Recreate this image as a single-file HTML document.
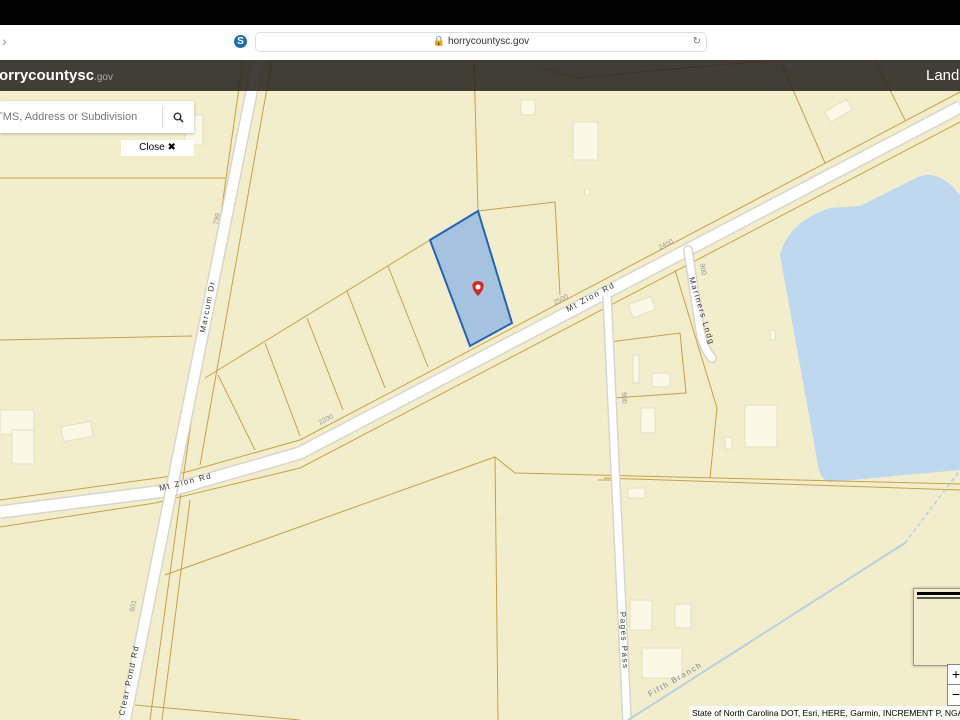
<!DOCTYPE html>
<html><head><meta charset="utf-8"><style>
html,body{margin:0;padding:0;width:960px;height:720px;overflow:hidden;background:#f2eecb;font-family:"Liberation Sans",sans-serif}
.top{position:absolute;left:0;top:0;width:960px;height:25px;background:#000}
.bar{position:absolute;left:0;top:25px;width:960px;height:35px;background:#fff;border-bottom:1px solid #ddd}
.url{position:absolute;left:255px;top:32px;width:450px;height:18px;background:#fff;border:1px solid #ddd;border-radius:5px;font-size:10px;color:#333;text-align:center;line-height:18px}
.hdr{position:absolute;left:0;top:60px;width:960px;height:31px;background:rgba(40,38,32,0.88);color:#fff}
.search{position:absolute;left:0;top:101px;width:194px;height:32px;background:#fff;box-shadow:0 1px 3px rgba(0,0,0,.25);font-size:11px;color:#777;overflow:hidden}
.close{position:absolute;left:121px;top:140px;width:73px;height:16px;background:#fff;font-size:10px;text-align:center;line-height:16px;color:#000}
.attr{position:absolute;left:689px;top:706px;width:280px;height:14px;background:rgba(255,255,255,.85);font-size:8.5px;line-height:14px;padding-left:3px;color:#000;white-space:nowrap}
.mini{position:absolute;left:913px;top:588px;width:50px;height:76px;background:#f2eecb;border:1px solid #999;box-shadow:0 0 3px rgba(0,0,0,.3)}
.zoom{position:absolute;left:947px;top:664px;width:16px;height:40px;background:#fff;border:1px solid #888;font-size:14px;line-height:19px;text-align:center}
</style></head><body>
<svg width="960" height="720" style="position:absolute;left:0;top:0">
<rect width="960" height="720" fill="#f2eecb"/>
<path d="M780 255 Q788 222 830 208 L860 206 L918 177 Q935 170 952 186 L960 195 L960 470 L830 482 Q820 480 818 465 Z" fill="#bed8ef"/>
<g stroke="#c9a04a" stroke-width="1" fill="none">
<path d="M0 500 L172 476 L300 440 L960 92"/>
<path d="M0 527 L155 503 L300 468 L960 122"/>
<path d="M243 60 L180 500 L150 720"/>
<path d="M272 60 L200 465"/>
<path d="M190 500 L162 720"/>
<path d="M0 340 L192 336"/>
<path d="M0 178 L225 178"/>
<path d="M205 378 L430 240 L478 211 L555 202 L560 295"/>
<path d="M218 375 L255 450"/><path d="M265 343 L300 436"/><path d="M307 318 L343 410"/><path d="M347 291 L385 388"/><path d="M388 266 L428 367"/>
<path d="M474 60 L478 211"/>
<path d="M165 575 L495 457 L515 473 L960 484"/>
<path d="M495 457 L498 720"/>
<path d="M608 300 L612 480 L598 480"/>
<path d="M610 342 L680 333 L686 393 L613 398"/>
<path d="M675 270 L717 408 L710 478"/>
<path d="M604 478 L960 490"/>
<path d="M780 60 L825 163"/><path d="M875 60 L905 120"/>
<path d="M540 68 L580 78 L660 70 L780 60"/>
<path d="M135 705 L300 720"/>
</g>
<g stroke-linecap="butt" fill="none">
<path d="M0 512 L172 490 L300 453 L960 107" stroke="#d8d6cc" stroke-width="14"/>
<path d="M0 512 L172 490 L300 453 L960 107" stroke="#fff" stroke-width="11"/>
<path d="M258 60 L125 720" stroke="#d8d6cc" stroke-width="13"/>
<path d="M258 60 L125 720" stroke="#fff" stroke-width="10"/>
<path d="M607 296 L627 720" stroke="#d8d6cc" stroke-width="10"/>
<path d="M607 296 L627 720" stroke="#fff" stroke-width="7"/>
<path d="M688 250 L700 330 Q703 348 712 358" stroke="#d8d6cc" stroke-width="10" stroke-linecap="round"/>
<path d="M688 250 L700 330 Q703 348 712 358" stroke="#fff" stroke-width="7" stroke-linecap="round"/>
<path d="M628 720 L905 543" stroke="#b8d0e5" stroke-width="2"/>
<path d="M905 543 L960 470" stroke="#b8d0e5" stroke-width="1.5" stroke-dasharray="4 3"/>
</g>
<g fill="#fbf9e6" stroke="#e2dfc4">
<rect x="521" y="100" width="14" height="15"/><rect x="573" y="122" width="25" height="38"/>
<rect x="826" y="105" width="25" height="12" transform="rotate(-30 838 111)"/>
<rect x="630" y="300" width="24" height="14" transform="rotate(-20 642 307)"/>
<rect x="633" y="355" width="6" height="28"/><rect x="652" y="373" width="18" height="14"/>
<rect x="641" y="408" width="14" height="25"/><rect x="745" y="405" width="32" height="42"/>
<rect x="725" y="437" width="7" height="12"/><rect x="770" y="330" width="5" height="10"/>
<rect x="630" y="600" width="22" height="30"/><rect x="675" y="604" width="16" height="24"/>
<rect x="642" y="648" width="40" height="30"/><rect x="628" y="488" width="17" height="10"/>
<rect x="0" y="410" width="34" height="24"/><rect x="12" y="430" width="22" height="34"/>
<rect x="62" y="424" width="30" height="15" transform="rotate(-10 77 431)"/>
<rect x="185" y="115" width="18" height="30"/><rect x="585" y="189" width="5" height="6"/>
</g>
<polygon points="430,240 478,211 512,323 470,346" fill="#a5c3de" stroke="#2563b8" stroke-width="2"/>
<path d="M478 296 C470 288 471 281 478 281 C485 281 486 288 478 296 Z" fill="#d42a20"/>
<circle cx="478" cy="287" r="2.5" fill="#fff"/>
<g font-family="Liberation Sans" font-size="8" fill="#333" letter-spacing="1.5">
<text transform="translate(160 491) rotate(-14)">Mt Zion Rd</text>
<text transform="translate(568 312) rotate(-28)">Mt Zion Rd</text>
<text transform="translate(205 333) rotate(-79)">Marcum Dr</text>
<text transform="translate(124 716) rotate(-78)">Clear Pond Rd</text>
<text transform="translate(620 612) rotate(87)">Pages Pass</text>
<text transform="translate(689 278) rotate(73)">Mariners Lndg</text>
<text transform="translate(650 697) rotate(-30)" fill="#7a8a99">Fifth Branch</text>
</g>
<g font-family="Liberation Sans" font-size="7" fill="#999">
<text transform="translate(320 425) rotate(-28)">2200</text>
<text transform="translate(555 305) rotate(-28)">2500</text>
<text transform="translate(660 250) rotate(-28)">2450</text>
<text transform="translate(218 225) rotate(-80)">799</text>
<text transform="translate(700 264) rotate(80)">900</text>
<text transform="translate(622 392) rotate(90)">900</text>
<text transform="translate(134 612) rotate(-78)">601</text>
</g>
</svg>
<div class="top"></div>
<div class="bar"><div style="position:absolute;left:2px;top:8px;color:#999;font-size:14px">›</div>
<div style="position:absolute;left:234px;top:10px;width:13px;height:13px;border-radius:50%;background:#1f6fa6;color:#fff;font-size:10px;font-weight:bold;text-align:center;line-height:13px">S</div></div>
<div class="url">🔒 horrycountysc.gov<span style="position:absolute;right:5px;color:#777">↻</span></div>
<div class="hdr"><div style="position:absolute;left:-1px;top:7px;font-size:15px;font-weight:600">orrycountysc<span style="font-size:10px;color:#aaa;font-weight:normal">.gov</span></div>
<div style="position:absolute;left:926px;top:7px;font-size:15px">Land</div></div>
<div class="search"><span style="position:absolute;left:-4px;top:10px">TMS, Address or Subdivision</span>
<div style="position:absolute;left:162px;top:5px;width:1px;height:22px;background:#ddd"></div>
<svg style="position:absolute;left:173px;top:11px" width="11" height="11"><circle cx="4.5" cy="4.5" r="3.3" fill="none" stroke="#333" stroke-width="1.4"/><path d="M7 7 L10 10" stroke="#333" stroke-width="1.6"/></svg></div>
<div class="close">Close ✖</div>
<div class="mini"><div style="height:3px;background:#000;margin:3px 3px 0"></div><div style="height:2px;background:#555;margin:2px 3px"></div></div>
<div class="zoom">+<div style="border-top:1px solid #888">−</div></div>
<div class="attr">State of North Carolina DOT, Esri, HERE, Garmin, INCREMENT P, NGA,</div>
</body></html>
